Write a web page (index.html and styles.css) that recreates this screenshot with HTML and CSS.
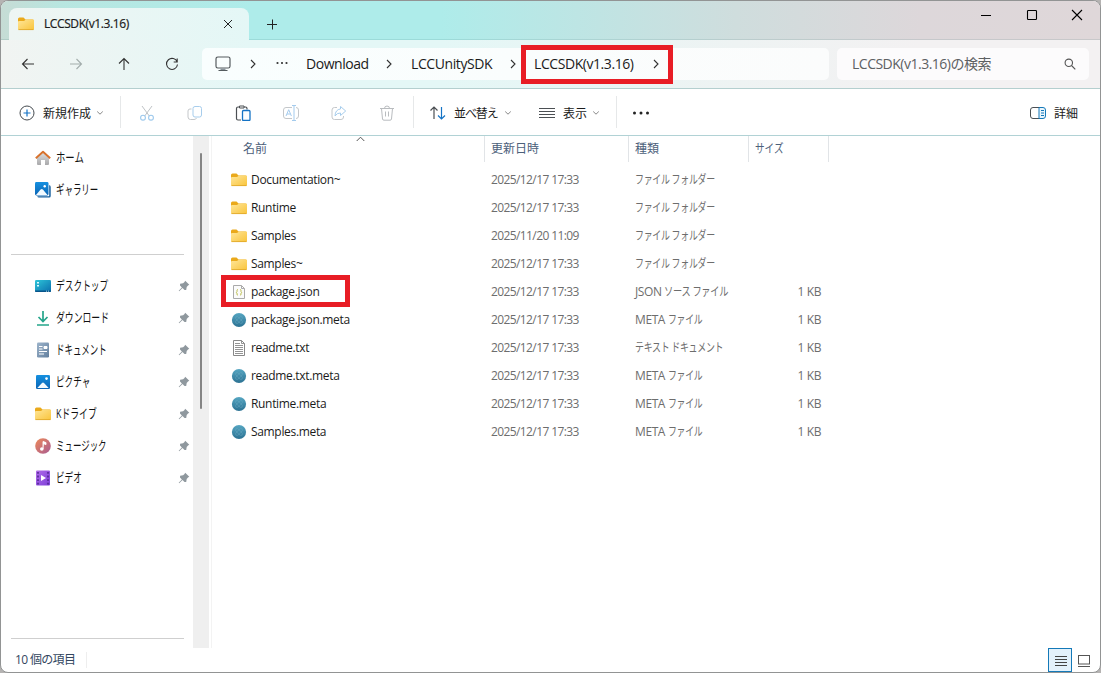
FILE: index.html
```html
<!DOCTYPE html>
<html lang="ja">
<head>
<meta charset="utf-8">
<title>LCCSDK(v1.3.16)</title>
<link rel="stylesheet" href="styles.css">
</head>
<body>
<svg class="defs" width="0" height="0">
  <defs>
    <linearGradient id="gFolder" x1="0" y1="0" x2="1" y2="1"><stop offset="0" stop-color="#ffe699"/><stop offset="1" stop-color="#f9c43b"/></linearGradient>
    <linearGradient id="gBlue" x1="0" y1="0" x2="0" y2="1"><stop offset="0" stop-color="#1590e0"/><stop offset="1" stop-color="#0b65b5"/></linearGradient>
    <linearGradient id="gDesk" x1="0" y1="0" x2="1" y2="1"><stop offset="0" stop-color="#2dc5d8"/><stop offset="1" stop-color="#0b6fae"/></linearGradient>
    <linearGradient id="gDoc" x1="0" y1="0" x2="1" y2="1"><stop offset="0" stop-color="#9db4cb"/><stop offset="1" stop-color="#627f9e"/></linearGradient>
    <linearGradient id="gMusic" x1="0" y1="0" x2="1" y2="1"><stop offset="0" stop-color="#ee8a58"/><stop offset="1" stop-color="#a85b92"/></linearGradient>
    <linearGradient id="gVideo" x1="0" y1="0" x2="1" y2="1"><stop offset="0" stop-color="#b06be8"/><stop offset="1" stop-color="#7d3fd8"/></linearGradient>
    <linearGradient id="gHome" x1="0" y1="0" x2="0" y2="1"><stop offset="0" stop-color="#e0e0e0"/><stop offset="1" stop-color="#a9a9ab"/></linearGradient>
    <linearGradient id="gMeta" x1="0" y1="0" x2="0" y2="1"><stop offset="0" stop-color="#56a6c2"/><stop offset="1" stop-color="#2b7192"/></linearGradient>
  </defs>
  <symbol id="folder" viewBox="0 0 16 16"><path d="M0 3Q0 1.500 1.500 1.500H5.500L7.500 3.500H14.500Q16 3.500 16 5V8H0Z" fill="#eaa91b"/><path d="M0 6Q0 5 1 5H6L8 3.500H15Q16 3.500 16 4.500V13Q16 14 15 14H1Q0 14 0 13Z" fill="url(#gFolder)"/><path d="M.5 13.600H15.500" stroke="#dda526" stroke-width=".8"/></symbol>
  <symbol id="chev" viewBox="0 0 10 10"><path d="M3 1L7 5L3 9" fill="none" stroke="#333" stroke-width="1.100"/></symbol>
  <symbol id="down" viewBox="0 0 8 8"><path d="M1.200 2.500L4 5.200L6.800 2.500" fill="none" stroke="#888" stroke-width="1"/></symbol>
  <symbol id="pin" viewBox="0 0 12 12"><path d="M7.200.7L11.300 4.700L10 5.500L8.700 7L8.200 10L6.500 9.900L4.500 8L1.200 11.300L.7 10.800L3.900 7.400L2 5.400L2.100 3.800L5.100 3.300L6.500 2Z" fill="#8f989e"/></symbol>
  <symbol id="meta" viewBox="0 0 16 16"><circle cx="8" cy="8" r="7.100" fill="url(#gMeta)"/><g fill="none" stroke="#70afc6" stroke-width=".6" opacity=".65"><ellipse cx="8" cy="8" rx="4.500" ry="1.800" transform="rotate(45 8 8)"/><ellipse cx="8" cy="8" rx="4.500" ry="1.800" transform="rotate(-45 8 8)"/></g></symbol>
</svg>

<div class="window">
  <header class="titlebar">
    <div class="tab">
      <svg class="i16"><use href="#folder"/></svg>
      <span class="tab-title">LCCSDK(v1.3.16)</span>
      <svg class="tab-close" width="10" height="10" viewBox="0 0 10 10"><path d="M1 1L9 9M9 1L1 9" stroke="#222"/></svg>
    </div>
    <svg class="new-tab" width="12" height="12" viewBox="0 0 12 12"><path d="M1 6.500H11M6.500 1.500V11.500" stroke="#222"/></svg>
    <div class="controls">
      <span><svg width="12" height="12" viewBox="0 0 12 12"><path d="M1 6.500H11" stroke="#000"/></svg></span>
      <span><svg width="12" height="12" viewBox="0 0 12 12"><rect x="1.500" y="1.500" width="9" height="9" rx=".8" fill="none" stroke="#000" stroke-width="1.100"/></svg></span>
      <span><svg width="12" height="12" viewBox="0 0 12 12"><path d="M1 1L11 11M11 1L1 11" stroke="#000" stroke-width="1.100"/></svg></span>
    </div>
  </header>

  <nav class="navbar">
    <div class="nav-buttons">
      <span><svg width="14" height="14" viewBox="0 0 14 14" fill="none" stroke="#333" stroke-width="1.100"><path d="M13 7H1.500M6.500 2L1.500 7L6.500 12"/></svg></span>
      <span><svg width="14" height="14" viewBox="0 0 14 14" fill="none" stroke="#a3adac" stroke-width="1.100"><path d="M1 7H12.500M7.500 2L12.500 7L7.500 12"/></svg></span>
      <span><svg width="14" height="14" viewBox="0 0 14 14" fill="none" stroke="#333" stroke-width="1.100"><path d="M7 13V1.500M2 6.500L7 1.500L12 6.500"/></svg></span>
      <span><svg width="14" height="14" viewBox="0 0 14 14" fill="none" stroke="#333" stroke-width="1.100"><path d="M12.200 5A5.500 5.500 0 1 0 12.500 7.500M12.200 1.500V5H8.700"/></svg></span>
    </div>
    <div class="address">
      <svg class="mid" width="16" height="16" viewBox="0 0 16 16"><rect x="1" y="1" width="14" height="11" rx="1.800" fill="none" stroke="#555b5e" stroke-width="1.200"/><path d="M5.500 12.500H10.500V14H5.500Z" fill="#89939a"/><path d="M3.500 14.500H12.500" stroke="#555b5e" stroke-width="1.200"/></svg>
      <svg class="mid i10"><use href="#chev"/></svg>
      <svg class="mid dots" width="12" height="4" viewBox="0 0 12 4" fill="#333"><circle cx="1.500" cy="2" r="1.100"/><circle cx="6" cy="2" r="1.100"/><circle cx="10.500" cy="2" r="1.100"/></svg>
      <span class="crumb crumb-download">Download</span>
      <svg class="mid i10"><use href="#chev"/></svg>
      <span class="crumb crumb-unity">LCCUnitySDK</span>
      <svg class="mid i10"><use href="#chev"/></svg>
      <span class="crumb crumb-sdk">LCCSDK(v1.3.16)</span>
      <svg class="mid i10"><use href="#chev"/></svg>
      <i class="mark mark-address"></i>
    </div>
    <div class="search">
      <span class="search-text">LCCSDK(v1.3.16)の検索</span>
      <svg width="12" height="12" viewBox="0 0 12 12" fill="none" stroke="#555" stroke-width="1.100"><circle cx="4.800" cy="4.800" r="3.700"/><path d="M7.500 7.500L11.300 11.300"/></svg>
    </div>
  </nav>

  <div class="commands">
    <div class="cmd cmd-new">
      <svg width="16" height="16" viewBox="0 0 16 16" fill="none"><circle cx="8" cy="8" r="7" stroke="#454b50"/><path d="M8 4.500V11.500M4.500 8H11.500" stroke="#1473c5" stroke-width="1.200"/></svg>
      <span class="label label-new">新規作成</span>
      <svg class="i8"><use href="#down"/></svg>
    </div>
    <div class="tools">
      <span><svg width="16" height="16" viewBox="0 0 16 16" fill="none"><path d="M3 1L10.300 11M13 1L5.700 11" stroke="#bfc3c6"/><circle cx="4" cy="12.700" r="2.400" stroke="#9cc8ec" stroke-width="1.100"/><circle cx="12" cy="12.700" r="2.400" stroke="#9cc8ec" stroke-width="1.100"/></svg></span>
      <span><svg width="16" height="16" viewBox="0 0 16 16" fill="none"><path d="M4.500 4H3Q1 4 1 6V12Q1 14.500 3.500 14.500H7Q9 14.500 9.500 13" stroke="#c4c7ca"/><rect x="6" y="1.500" width="8.500" height="10.500" rx="2" stroke="#a7cdec"/></svg></span>
      <span><svg width="16" height="16" viewBox="0 0 16 16" fill="none"><path d="M6 15H3Q1.500 15 1.500 13.500V3.500Q1.500 2 3 2H10.500Q12 2 12 3.500V4.500" stroke="#4b4f53" stroke-width="1.200"/><path d="M4.500 3V1H9V3Z" fill="#fff" stroke="#4b4f53"/><rect x="7.500" y="5.500" width="7.500" height="10" rx="1" stroke="#1473c5" stroke-width="1.300" fill="#fafdff"/></svg></span>
      <span><svg width="16" height="16" viewBox="0 0 16 16" fill="none"><path d="M9 2.500H3Q.5 2.500 .5 5V11Q.5 13.500 3 13.500H9M13 2.500Q15.500 2.500 15.500 5V11Q15.500 13.500 13 13.500" stroke="#c4c7ca"/><path d="M9 .5H13M11 .5V15.500M9 15.500H13M3 11L5.700 4.700L8.400 11M4 9H7.400" stroke="#a4cbed"/></svg></span>
      <span><svg width="16" height="16" viewBox="0 0 16 16" fill="none"><path d="M6 2.500H3.500Q1 2.500 1 5V12Q1 14.500 3.500 14.500H10Q12.500 14.500 12.500 12V11" stroke="#c4c7ca"/><path d="M9.500 1.500L14.700 6L9.500 10.500V8Q6 7.800 4 11Q4.300 4.500 9.500 4Z" stroke="#a7cdec"/></svg></span>
      <span><svg width="16" height="16" viewBox="0 0 16 16" fill="none" stroke="#b9bcbf"><path d="M1 3.500H15M5.500 3.500Q5.500 1 8 1Q10.500 1 10.500 3.500M2.500 3.500L3.500 14Q3.600 15.200 5 15.200H11Q12.400 15.200 12.500 14L13.500 3.500M6.500 6.500V11.500M9.500 6.500V11.500"/></svg></span>
    </div>
    <div class="cmd cmd-sort">
      <svg width="18" height="16" viewBox="0 0 18 16" fill="none"><path d="M5 14V2M1.500 5.500L5 2L8.500 5.500" stroke="#4b4f53" stroke-width="1.200"/><path d="M12.500 2V14M9 10.500L12.500 14L16 10.500" stroke="#1473c5" stroke-width="1.200"/></svg>
      <span class="label label-sort">並べ替え</span>
      <svg class="i8"><use href="#down"/></svg>
    </div>
    <div class="cmd cmd-view">
      <svg width="16" height="12" viewBox="0 0 16 12"><path d="M0 1.500H16M0 4.500H16M0 7.500H16M0 10.500H16" stroke="#4b4f53"/></svg>
      <span class="label">表示</span>
      <svg class="i8"><use href="#down"/></svg>
    </div>
    <div class="cmd cmd-more"><svg width="18" height="4" viewBox="0 0 18 4" fill="#222"><circle cx="2.500" cy="2" r="1.500"/><circle cx="9" cy="2" r="1.500"/><circle cx="15.500" cy="2" r="1.500"/></svg></div>
    <div class="cmd cmd-details">
      <svg width="16" height="12" viewBox="0 0 16 12" fill="none"><path d="M9 .5H3Q.5 .5 .5 3V9Q.5 11.500 3 11.500H9" stroke="#4b4f53"/><path d="M9 .5H13Q15.500 .5 15.500 3V9Q15.500 11.500 13 11.500H9Z" fill="#eaf6fd" stroke="#1679b9"/><path d="M11 3.500H14M11 6H14M11 8.500H14" stroke="#1679b9"/></svg>
      <span class="label">詳細</span>
    </div>
  </div>

  <div class="content">
    <aside class="sidebar">
      <div class="places places-main">
        <div class="place"><svg class="i16" viewBox="0 0 16 16"><path d="M2 7L8 2L14 7V14Q14 15 13 15H10V10H6V15H3Q2 15 2 14Z" fill="url(#gHome)"/><path d="M.8 8.200L8 1.700L15.200 8.200" fill="none" stroke="#d8722d" stroke-width="1.900" stroke-linejoin="round"/></svg><span class="kana home">ホーム</span></div>
        <div class="place"><svg class="i16" viewBox="0 0 16 16"><path d="M14.200 3Q15.700 3.300 15.700 5V14Q15.700 15.500 14.200 15.500H4Q2.500 15.500 2.200 14.300H14.200Z" fill="#135d9d"/><rect width="13.500" height="13.500" rx="1.400" fill="url(#gBlue)"/><path d="M1 13L5.600 7.600Q6.700 6.300 7.900 7.600L12.500 13Z" fill="#f2faff"/><circle cx="9.700" cy="4.200" r="1.200" fill="#fff"/></svg><span class="kana gallery">ギャラリー</span></div>
      </div>
      <div class="places places-pinned">
        <div class="place"><svg class="i16" viewBox="0 0 16 16"><rect y="2" width="16" height="12" rx="1.200" fill="url(#gDesk)"/><path d="M0 12.500H16V13Q16 14 15 14H1Q0 14 0 13Z" fill="#08548a"/><path d="M2 4H4V5.500H2ZM2 7H4V8.500H2ZM11 12.800H12V13.500H11ZM13 12.800H14V13.500H13Z" fill="#d9fbff"/></svg><span class="kana desktop">デスクトップ</span><svg class="pin"><use href="#pin"/></svg></div>
        <div class="place"><svg class="i16" viewBox="0 0 16 16"><path d="M8 1V11M3.500 7L8 11.500L12.500 7M2 15H14" fill="none" stroke="#25a58b" stroke-width="1.700"/></svg><span class="kana downloads">ダウンロード</span><svg class="pin"><use href="#pin"/></svg></div>
        <div class="place"><svg class="i16" viewBox="0 0 16 16"><rect x="2" y=".5" width="12" height="15" rx="1.300" fill="url(#gDoc)"/><path d="M4 4.500H7.500M4 7H7.500M4 9.500H12M4 12H9M9 4.500H12V6.500H9Z" stroke="#fff" stroke-width="1" fill="#fff"/></svg><span class="kana docs">ドキュメント</span><svg class="pin"><use href="#pin"/></svg></div>
        <div class="place"><svg class="i16" viewBox="0 0 16 16"><rect x="1" y="1" width="14" height="14" rx="1.300" fill="url(#gBlue)"/><path d="M2.300 14L7 9Q8 8 9 9L13.700 14Z" fill="#f2faff"/><circle cx="11.500" cy="4.600" r="1.300" fill="#fff"/></svg><span class="kana pics">ピクチャ</span><svg class="pin"><use href="#pin"/></svg></div>
        <div class="place"><svg class="i16"><use href="#folder"/></svg><span class="kana kdrive">Kドライブ</span><svg class="pin"><use href="#pin"/></svg></div>
        <div class="place"><svg class="i16" viewBox="0 0 16 16"><circle cx="8" cy="8" r="7.800" fill="url(#gMusic)"/><path d="M8 11V3.500L11 4.600V6.600L8.800 5.800" fill="#fff" stroke="#fff" stroke-width=".9"/><circle cx="6.800" cy="11" r="1.800" fill="#fff"/></svg><span class="kana music">ミュージック</span><svg class="pin"><use href="#pin"/></svg></div>
        <div class="place"><svg class="i16" viewBox="0 0 16 16"><rect x="1" y=".5" width="14" height="15" rx="1" fill="url(#gVideo)"/><path d="M3 2V14.500M13 2V14.500" stroke="#4e238c" stroke-width="1.500" stroke-dasharray="1.800 1.800"/><path d="M6 5L11 8L6 11Z" fill="#fff"/></svg><span class="kana video">ビデオ</span><svg class="pin"><use href="#pin"/></svg></div>
      </div>
    </aside>
    <div class="scroll-track"><div class="scroll-thumb"></div></div>
    <main class="files">
      <div class="row head">
        <span>名前<svg class="sort-mark" width="9" height="6" viewBox="0 0 9 6"><path d="M.7 5L4.500 1.200L8.300 5" fill="none" stroke="#555"/></svg></span><span>更新日時</span><span>種類</span><span><b class="kana size">サイズ</b></span>
      </div>
      <div class="row"><span class="name"><svg class="i16"><use href="#folder"/></svg>Documentation~</span><span class="date">2025/12/17 17:33</span><span class="type"><b class="kana ftype">ファイル フォルダー</b></span><span class="kb"></span></div>
      <div class="row"><span class="name"><svg class="i16"><use href="#folder"/></svg>Runtime</span><span class="date">2025/12/17 17:33</span><span class="type"><b class="kana ftype">ファイル フォルダー</b></span><span class="kb"></span></div>
      <div class="row"><span class="name"><svg class="i16"><use href="#folder"/></svg>Samples</span><span class="date">2025/11/20 11:09</span><span class="type"><b class="kana ftype">ファイル フォルダー</b></span><span class="kb"></span></div>
      <div class="row"><span class="name"><svg class="i16"><use href="#folder"/></svg>Samples~</span><span class="date">2025/12/17 17:33</span><span class="type"><b class="kana ftype">ファイル フォルダー</b></span><span class="kb"></span></div>
      <div class="row"><i class="mark mark-file"></i><span class="name"><svg class="i16" viewBox="0 0 16 16"><path d="M2.500 1.500H10.500L13.500 4.500V14.500H2.500Z" fill="#fbfbfb" stroke="#aaa"/><path d="M10.500 1.500V4.500H13.500" fill="none" stroke="#aaa"/><path d="M7 5.500Q6 5.500 6 6.500V7.500L5.300 8.300L6 9V10.200Q6 11.200 7 11.200M9 5.500Q10 5.500 10 6.500V7.500L10.700 8.300L10 9V10.200Q10 11.200 9 11.200" fill="none" stroke="#b5b83e" stroke-width=".9"/></svg>package.json</span><span class="date">2025/12/17 17:33</span><span class="type">JSON <b class="kana jtype">ソース ファイル</b></span><span class="kb">1 KB</span></div>
      <div class="row"><span class="name"><svg class="i16"><use href="#meta"/></svg>package.json.meta</span><span class="date">2025/12/17 17:33</span><span class="type">META <b class="kana mtype">ファイル</b></span><span class="kb">1 KB</span></div>
      <div class="row"><span class="name"><svg class="i16" viewBox="0 0 16 16"><path d="M2.500 .5H10.500L13.500 3.500V15.500H2.500Z" fill="#fff" stroke="#888"/><path d="M10.500 .5V3.500H13.500M4 3.500H9M4 5.500H12M4 7.500H12M4 9.500H12M4 11.500H12M4 13.500H12" fill="none" stroke="#888" stroke-width=".9"/></svg>readme.txt</span><span class="date">2025/12/17 17:33</span><span class="type"><b class="kana ttype">テキスト ドキュメント</b></span><span class="kb">1 KB</span></div>
      <div class="row"><span class="name"><svg class="i16"><use href="#meta"/></svg>readme.txt.meta</span><span class="date">2025/12/17 17:33</span><span class="type">META <b class="kana mtype">ファイル</b></span><span class="kb">1 KB</span></div>
      <div class="row"><span class="name"><svg class="i16"><use href="#meta"/></svg>Runtime.meta</span><span class="date">2025/12/17 17:33</span><span class="type">META <b class="kana mtype">ファイル</b></span><span class="kb">1 KB</span></div>
      <div class="row"><span class="name"><svg class="i16"><use href="#meta"/></svg>Samples.meta</span><span class="date">2025/12/17 17:33</span><span class="type">META <b class="kana mtype">ファイル</b></span><span class="kb">1 KB</span></div>
    </main>
  </div>

  <footer class="status">
    <span class="count">10 個の項目</span>
    <div class="view-modes">
      <span class="mode active"><svg width="14" height="12" viewBox="0 0 14 12"><path d="M1 1.500H13M1 4.500H13M1 7.500H13M1 10.500H13" stroke="#444"/></svg></span>
      <span class="mode"><svg width="12" height="12" viewBox="0 0 12 12"><rect x=".5" y=".5" width="11" height="8.500" fill="none" stroke="#555"/><path d="M0 11.500H12" stroke="#555"/></svg></span>
    </div>
  </footer>
</div>
</body>
</html>
```

FILE: styles.css
```css
* { box-sizing: border-box; }
body {
  margin: 0;
  background: #b5b3b2;
  color: #1b1b1b;
  font: 12px/16px "Open Sans", "Noto Sans CJK JP", sans-serif;
}
svg { display: block; flex: none; }
.defs { position: absolute; }
.i16 { width: 16px; height: 16px; }
.i10 { width: 10px; height: 10px; }
.i8 { width: 8px; height: 8px; }

.window {
  width: 1101px;
  height: 673px;
  display: flex;
  flex-direction: column;
  overflow: hidden;
  background: #fff;
  border: 1px solid #929494;
  border-radius: 8px;
}

/* title bar and tab */
.titlebar {
  height: 39px;
  flex: none;
  display: flex;
  background: linear-gradient(90deg, #c6dcd5 0, #b8e6e0 60px, #aeecea 250px, #aeecea 440px, #cfdddd 735px, #ddd7da 920px, #dfd7d9);
  box-shadow: inset 0 -1px #0f50501c;
}
.tab {
  width: 240px;
  margin: 7px 0 0 8px;
  padding: 0 16px 0 9px;
  display: flex;
  align-items: center;
  border-radius: 8px 8px 0 0;
  background: linear-gradient(90deg, #eef5f3, #e4f7f6);
}
.tab-title { margin-left: 10px; font-weight: 500; letter-spacing: -.4px; -webkit-text-stroke: .2px #1b1b1b; }
.tab-close { margin-left: auto; }
.new-tab { margin: 17px 0 0 17px; }
.controls { margin-left: auto; display: flex; }
.controls span { width: 45.500px; height: 28px; display: flex; align-items: center; justify-content: center; }

/* navigation */
.navbar {
  height: 49px;
  flex: none;
  display: flex;
  align-items: center;
  border-bottom: 1px solid #b4cfcf;
  background: linear-gradient(90deg, #f1f4f2 0, #e4f7f6 250px, #e4f7f6 440px, #eef3f3 735px, #f3f1f2 920px, #f3f1f2);
}
.nav-buttons { display: flex; width: 201px; padding-left: 3px; }
.nav-buttons span { width: 48px; display: flex; justify-content: center; }
.address {
  position: relative;
  width: 627px;
  height: 32px;
  display: grid;
  grid-template-columns: 42px 18px 40px 78px 18px 106px 18px 125px 18px;
  align-items: center;
  border-radius: 5px;
  background: linear-gradient(90deg, #f9fefe, #fbfcfc);
}
.mid { justify-self: center; }
.dots { margin-top: -2px; }
.crumb { font-size: 14px; line-height: 20px; white-space: nowrap; }
.crumb-download { padding-left: 4px; letter-spacing: -.45px; }
.crumb-unity { padding-left: 13px; letter-spacing: -.4px; }
.crumb-sdk { padding-left: 12px; letter-spacing: -.43px; }
.mark { position: absolute; border: 5px solid #e81d25; }
.mark-address { left: 319px; top: -3px; width: 152px; height: 39px; }
.search {
  width: 252px;
  height: 32px;
  margin-left: 8px;
  padding: 0 13px 0 15px;
  display: flex;
  align-items: center;
  justify-content: space-between;
  border-radius: 5px;
  background: #fcfbfc;
  color: #5d6062;
}
.search-text { font-size: 14px; letter-spacing: -.5px; white-space: nowrap; }

/* command bar */
.commands {
  height: 47px;
  flex: none;
  display: flex;
  align-items: center;
  border-bottom: 1px solid #b1d2d5;
}
.cmd, .tools { height: 32px; padding-top: 2px; display: flex; align-items: center; white-space: nowrap; }
.label { margin: 1px 5px 0 8px; }
.cmd-new { width: 120px; padding-left: 18px; border-right: 1px solid #e6e8e9; }
.tools { padding-left: 2px; width: 293px; border-right: 1px solid #e6e8e9; }
.tools span { width: 48px; display: flex; justify-content: center; }
.cmd-sort { padding-left: 15px; width: 125px; }
.label-sort { margin-left: 7px; margin-right: 6px; letter-spacing: -1.100px; }
.cmd-view { width: 78px; border-right: 1px solid #e6e8e9; }
.cmd-more { padding-left: 15px; }
.cmd-details { margin-left: auto; padding-right: 17px; }

/* body */
.content { flex: 1; display: flex; min-height: 0; }
.sidebar { width: 192px; padding: 0 9px 0 10px; }
.places-main { height: 119px; padding-top: 6px; border-bottom: 1px solid #cfcfcf; }
.places-pinned { height: 384px; padding-top: 15px; border-bottom: 1px solid #cfcfcf; }
.place { height: 32px; padding: 0 0 0 24px; display: flex; align-items: center; }
.pin { width: 12px; height: 12px; margin: 0 -6px 0 auto; }
.kana {
  display: inline-block;
  font-weight: 400;
  white-space: nowrap;
  transform-origin: 0 50%;
}
.place .kana { width: 60px; margin: -2px 0 0 5px; font-size: 13px; color: #111; }
.home { transform: scaleX(.72); }
.gallery { transform: scaleX(.65); }
.desktop { transform: scaleX(.67); }
.downloads { transform: scaleX(.68); }
.docs, .music { transform: scaleX(.65); }
.pics, .video { transform: scaleX(.66); }
.kdrive { transform: scaleX(.68); }
.scroll-track { width: 16px; background: #efefef; }
.scroll-thumb { width: 2px; height: 256px; margin: 17px 0 0 7px; border-radius: 1px; background: #858585; }

.files { flex: 1; margin-left: 2px; border-left: 1px solid #f3f3f3; }
.row {
  position: relative;
  height: 28px;
  display: grid;
  grid-template-columns: 273px 144px 120px 80px;
  align-items: center;
  color: #6d6d6d;
  white-space: nowrap;
}
.row > .name { padding-left: 19px; display: flex; align-items: center; gap: 4px; color: #1b1b1b; letter-spacing: -.33px; }
.name .i16 { margin-top: -1px; }
.row .date { letter-spacing: -.6px; }
.row .kb { text-align: right; padding-right: 8px; letter-spacing: -.4px; }
.head { height: 30px; color: #4c607a; align-items: start; }
.head > span { height: 26px; padding: 5px 0 0 6px; border-right: 1px solid #e1e4e7; position: relative; }
.head > span:first-child { padding-left: 31px; }
.date, .type { padding-left: 6px; }
.type { letter-spacing: -.4px; }
.sort-mark { position: absolute; left: 144px; top: 0; }
.size { transform: scaleX(.8); }
.ftype { transform: scaleX(.745); }
.jtype { transform: scaleX(.77); }
.mtype { transform: scaleX(.74); }
.ttype { transform: scaleX(.745); }
.mark-file { left: 9px; top: -3px; width: 129px; height: 32px; }

/* status bar */
.status { height: 24px; flex: none; display: flex; align-items: center; color: #33475f; }
.count { margin-left: 14px; padding-right: 11px; border-right: 1px solid #eee; letter-spacing: -.65px; }
.view-modes { margin-left: auto; display: flex; padding-right: 4px; }
.mode { width: 24px; height: 24px; padding-top: 1px; display: flex; align-items: center; justify-content: center; }
.mode.active { padding-left: 1px; border: 1px solid #1479b8; background: #e3f1fb; }
```
